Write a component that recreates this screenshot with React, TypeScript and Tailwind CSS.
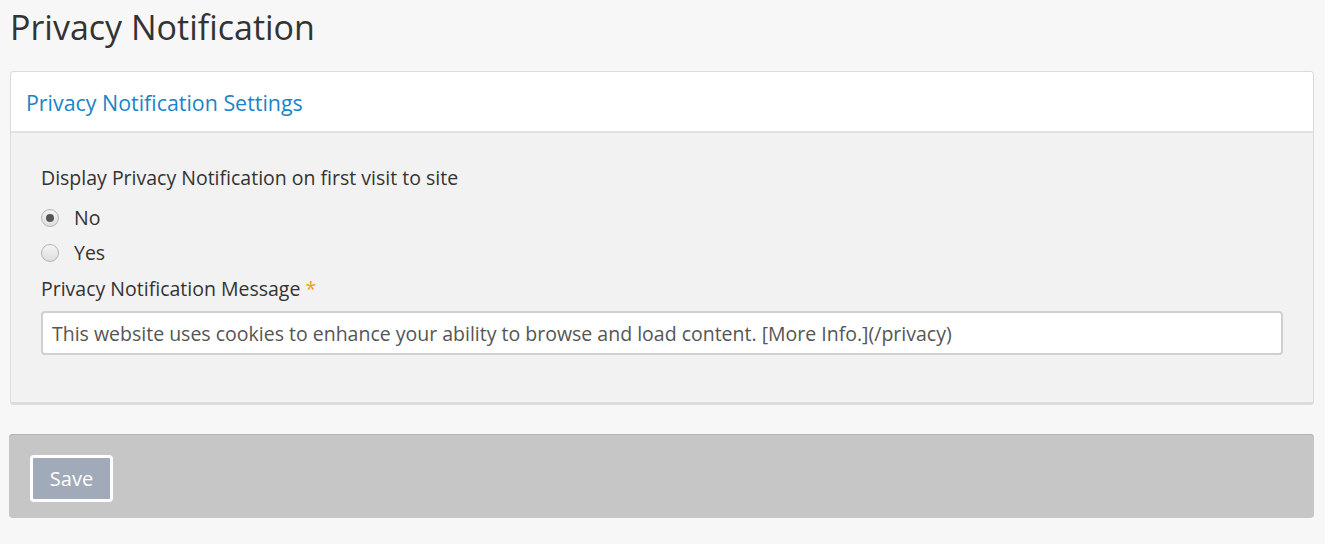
import React, { useState } from 'react';

const font = { fontFamily: '"Open Sans", "Liberation Sans", sans-serif' };

const Radio: React.FC<{ checked: boolean; label: string; onSelect: () => void }> = ({ checked, label, onSelect }) => (
    <label className="flex h-[35px] cursor-pointer items-center" onClick={onSelect}>
        <span className="flex h-[18px] w-[18px] items-center justify-center rounded-full border border-[#b4b4b4] bg-gradient-to-b from-[#f4f4f4] to-[#dedede]">
            {checked && <span className="h-[8px] w-[8px] rounded-full bg-[#555]" />}
        </span>
        <span className="ml-[15px] text-[19.5px] text-[#333]">{label}</span>
    </label>
);

export default function App() {
    const [show, setShow] = useState('no');
    const [message, setMessage] = useState(
        'This website uses cookies to enhance your ability to browse and load content. [More Info.](/privacy)'
    );

    return (
        <div className="min-h-[544px] bg-[#f7f7f7] px-[10px] pr-[11px]" style={font}>
            <h1 className="pt-[8px] text-[34px] leading-[38px] text-[#333]">Privacy Notification</h1>

            <div className="mt-[25px] overflow-hidden rounded-[4px] border border-[#dadada] border-b-[3px] border-b-[#dcdcdc]">
                <div className="flex h-[61px] items-center border-b-2 border-[#e2e2e2] bg-white px-[15px] pt-[3px]">
                    <h2 className="text-[21.4px] text-[#1a84c9]">Privacy Notification Settings</h2>
                </div>
                <div className="bg-[#f2f2f2] px-[30px] pt-[30px] pb-[47px]">
                    <div className="text-[19.5px] leading-[30px] text-[#333]">Display Privacy Notification on first visit to site</div>
                    <div className="mt-[7px]">
                        <Radio checked={show === 'no'} label="No" onSelect={() => setShow('no')} />
                        <Radio checked={show === 'yes'} label="Yes" onSelect={() => setShow('yes')} />
                    </div>
                    <div className="mt-[1px] text-[19.5px] leading-[36px] text-[#333]">
                        Privacy Notification Message <span className="text-[#f0a020]">*</span>
                    </div>
                    <input
                        value={message}
                        onChange={(e) => setMessage(e.target.value)}
                        className="mt-[4px] h-[44px] w-[1242px] rounded-[4px] border-2 border-[#d0d0d0] bg-white px-[9px] text-[19.5px] text-[#555] outline-none"
                        style={font}
                    />
                </div>
            </div>

            <div className="mt-[29px] -ml-[1px] flex h-[84px] items-start rounded-[4px] bg-[#c6c6c6] px-[21px] pt-[21px] shadow-[inset_0_1px_0_#b3b3b3]">
                <button
                    className="h-[47px] w-[83px] rounded-[4px] border-[3px] border-white bg-[#a1aab8] text-[20px] text-white"
                    style={font}
                >
                    Save
                </button>
            </div>
        </div>
    );
}
